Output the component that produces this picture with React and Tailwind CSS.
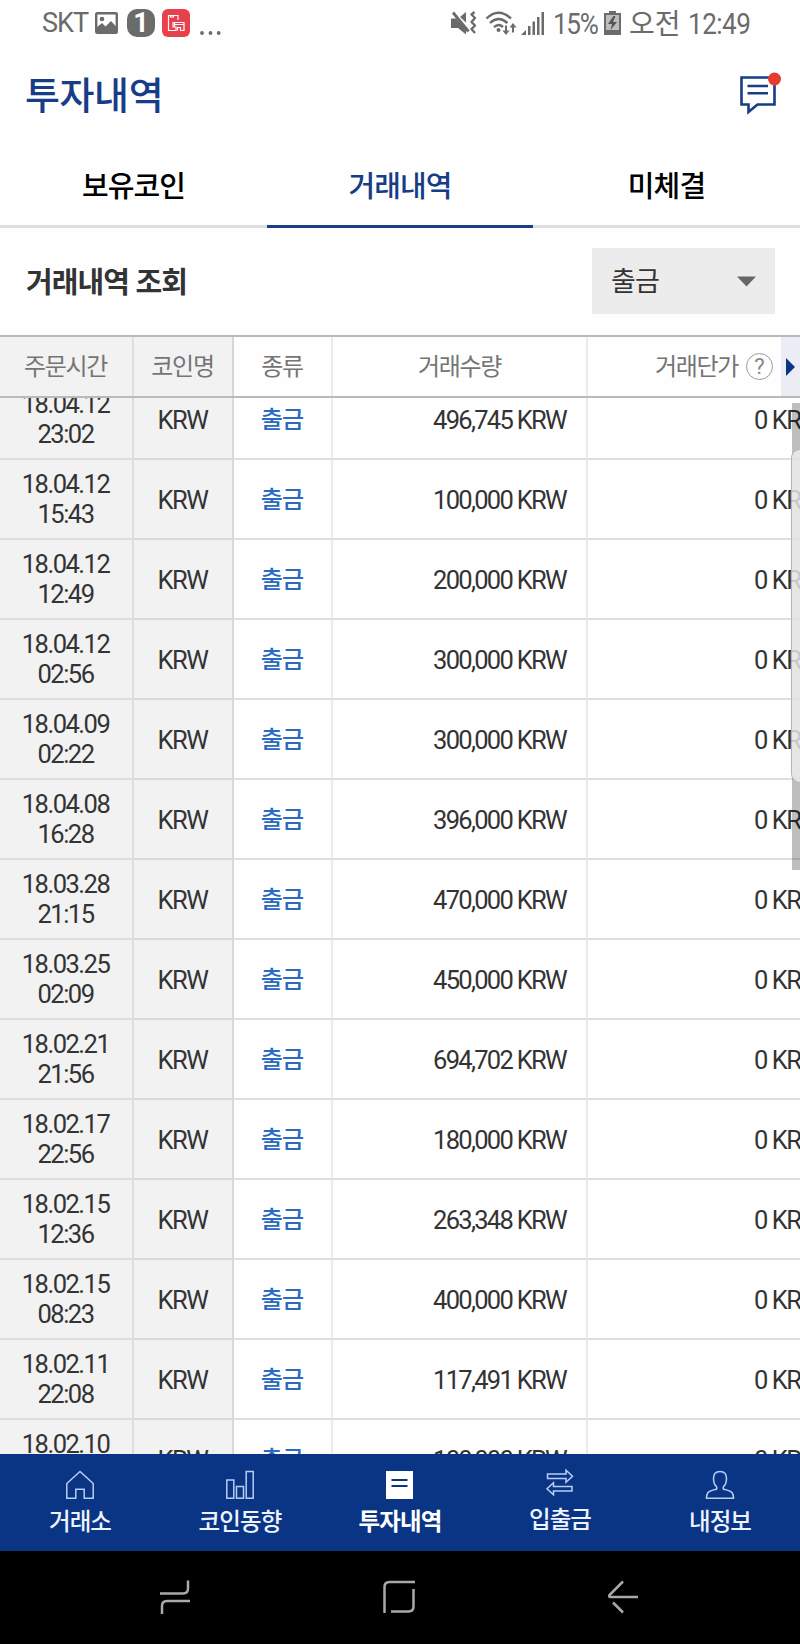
import React, { useState } from 'react';

const history = [
  { date: '18.04.12', time: '23:02', amount: '496,745' },
  { date: '18.04.12', time: '15:43', amount: '100,000' },
  { date: '18.04.12', time: '12:49', amount: '200,000' },
  { date: '18.04.12', time: '02:56', amount: '300,000' },
  { date: '18.04.09', time: '02:22', amount: '300,000' },
  { date: '18.04.08', time: '16:28', amount: '396,000' },
  { date: '18.03.28', time: '21:15', amount: '470,000' },
  { date: '18.03.25', time: '02:09', amount: '450,000' },
  { date: '18.02.21', time: '21:56', amount: '694,702' },
  { date: '18.02.17', time: '22:56', amount: '180,000' },
  { date: '18.02.15', time: '12:36', amount: '263,348' },
  { date: '18.02.15', time: '08:23', amount: '400,000' },
  { date: '18.02.11', time: '22:08', amount: '117,491' },
  { date: '18.02.10', time: '21:30', amount: '100,000' },
];

const StatusBar = () => (
  <div className="h-[46px] pl-[42px] pr-[51px] flex items-center justify-between text-[#6b6b6b] font-['Roboto','Noto_Sans_CJK_KR',sans-serif]">
    <div className="flex items-center">
      <span className="w-[47px] text-[27px] leading-none tracking-[-1px]">SKT</span>
      <svg className="ml-[6px]" width="23" height="22" viewBox="0 0 23 22">
        <rect x="1.2" y="1.2" width="20.6" height="19.6" rx="1" fill="none" stroke="#6b6b6b" strokeWidth="2.4" />
        <circle cx="7" cy="7" r="2.3" fill="#6b6b6b" />
        <path d="M1.5 15.5 7 11l3.5 3.5L16 9l5.500 6V21h-20z" fill="#6b6b6b" />
      </svg>
      <span className="ml-[9px] w-[28px] h-[28px] rounded-[10px] bg-[#6b6b6b] text-white text-[27px] leading-[28px] font-bold text-center">1</span>
      <svg className="ml-[7px]" width="28" height="28" viewBox="0 0 28 28">
        <rect width="28" height="28" rx="6" fill="#e6414c" />
        <g fill="none" stroke="#fff" strokeWidth="1.2">
          <path d="M16 11V6.500H6.500v15H14v-3.500h-3v-5M8.500 6.500v1.500h3v-1.500" />
          <path d="M12.500 17.500v-4h9.500v8h-3.500v-3h-3v3M12.500 15.500h9.500" />
        </g>
      </svg>
      <svg className="ml-[10px] mt-[19px]" width="21" height="6" viewBox="0 0 21 6" fill="#6b6b6b">
        <circle cx="2" cy="3" r="1.900" />
        <circle cx="10.500" cy="3" r="1.900" />
        <circle cx="18.700" cy="3" r="1.900" />
      </svg>
    </div>

    <div className="flex items-center">
      <svg width="26" height="24" viewBox="0 0 26 24">
        <path d="M0 7.500h5L15 18v5.500L7 17H0zM9 6l6-5v10.500z" fill="#6b6b6b" />
        <path d="M2 1.500l15.500 19" stroke="#6b6b6b" strokeWidth="2.800" />
        <path d="M23.500 1l-3 2.500 3.500 3.500-3.500 4 3.500 3.500-3.500 3.500 3.500 4" fill="none" stroke="#6b6b6b" strokeWidth="2.400" strokeLinejoin="round" />
      </svg>
      <svg className="ml-[8px]" width="32" height="25" viewBox="0 0 32 25" fill="none" stroke="#6b6b6b">
        <path d="M1.500 7.500Q13.500 -4 26 7.500" strokeWidth="2.400" />
        <path d="M5 12Q13.500 4 22.500 12" strokeWidth="2.400" />
        <path d="M9 16.200Q13.500 12 18 16" strokeWidth="2.400" />
        <circle cx="13.500" cy="19" r="2" fill="#6b6b6b" stroke="none" />
        <path d="M21 14.500v7M28 21.500v-7" strokeWidth="2" />
        <path d="M17.500 19.500h7l-3.500 4.500zM24.500 16.500h7l-3.500-4.500z" fill="#6b6b6b" stroke="none" />
      </svg>
      <svg className="ml-[4px]" width="24" height="23" viewBox="0 0 24 23" fill="#6b6b6b">
        <path d="M0 23l5-5v5z" />
        <rect x="7" y="14" width="2.500" height="9" />
        <rect x="11.500" y="9.500" width="2.500" height="13.500" />
        <rect x="16" y="5" width="2.500" height="18" />
        <rect x="20.500" y="0" width="2.500" height="23" />
      </svg>
      <span className="ml-[8px] w-[47px] text-[29px] leading-none tracking-[-1.500px] origin-left scale-x-90 whitespace-nowrap pt-[2px]">15%</span>
      <svg className="ml-[4px]" width="17" height="24" viewBox="0 0 17 24">
        <path d="M5 0h7v3h-7z" fill="#6b6b6b" />
        <rect x="1" y="3" width="15" height="20" fill="#bdbdbd" stroke="#6b6b6b" strokeWidth="2" />
        <path d="M1 19h15v4H1z" fill="#6b6b6b" />
        <path d="M9.500 5L4 13h4l-1.500 6 6.500-8H9l2.500-6z" fill="#555" />
      </svg>
      <span className="ml-[8px] w-[50px] text-[28px] leading-none whitespace-nowrap pt-[3px]">오전</span>
      <span className="ml-[9px] w-[61px] text-[29px] leading-none tracking-[-0.6px] origin-left scale-x-90 whitespace-nowrap pt-[2px]">12:49</span>
    </div>
  </div>
);

const HomeIcon = () => (
  <svg width="30" height="30" viewBox="0 0 30 30" fill="none" stroke="#b9cdf3" strokeWidth="1.5">
    <path d="M15 1.500L1.800 13.500v14.700h9v-9h8.400v9h9V13.500z" />
  </svg>
);

const ChartIcon = () => (
  <svg width="30" height="30" viewBox="0 0 30 30" fill="none" stroke="#b9cdf3" strokeWidth="1.5">
    <rect x="1.800" y="10" width="7" height="18.200" />
    <rect x="11.500" y="16.500" width="7" height="11.700" />
    <rect x="21.200" y="1.500" width="7" height="26.700" />
  </svg>
);

const ListIcon = () => (
  <svg width="30" height="30" viewBox="0 0 30 30">
    <rect x="1" y="1" width="27" height="28" fill="#fff" />
    <path d="M6.500 10h16M6.500 16h16" stroke="#0a3585" strokeWidth="2" />
  </svg>
);

const TransferIcon = () => (
  <svg width="30" height="30" viewBox="0 0 30 30" fill="none" stroke="#b9cdf3" strokeWidth="1.5">
    <path d="M2.500 6h18.500V2.200l6.500 6-6.500 6V10.500H2.500z" />
    <path d="M27 18.500H8.500v-3.700l-6.500 6 6.500 6v-3.700H27z" />
  </svg>
);

const UserIcon = () => (
  <svg width="30" height="30" viewBox="0 0 30 30" fill="none" stroke="#b9cdf3" strokeWidth="1.5">
    <path d="M15 1.500c-4 0-6.500 2.500-6.500 7 0 3.500 1 6.500 3.200 8.300v2.200c-3.500 1.200-7 1.500-8.700 3.500-1 1.300-1.500 3.500-1.500 5.700h27c0-2.200-.5-4.400-1.500-5.700-1.700-2-5.200-2.300-8.700-3.500v-2.200c2.200-1.800 3.200-4.800 3.200-8.300 0-4.500-2.500-7-6.500-7z" />
  </svg>
);

const menus = [
  { id: 'exchange', label: '거래소', icon: <HomeIcon /> },
  { id: 'trend', label: '코인동향', icon: <ChartIcon /> },
  { id: 'invest', label: '투자내역', icon: <ListIcon /> },
  { id: 'transfer', label: '입출금', icon: <TransferIcon />, raised: true },
  { id: 'my', label: '내정보', icon: <UserIcon /> },
];

const App = () => {
  const [tab, setTab] = useState('거래내역');
  const [menu, setMenu] = useState('invest');

  return (
    <div className="w-[800px] h-[1644px] overflow-hidden bg-[#fefefe] flex flex-col font-['Roboto','Noto_Sans_CJK_KR',sans-serif] text-[#333]">
      <StatusBar />

      <header className="h-[98px] pl-[25px] pr-[19px] flex items-center justify-between">
        <h1 className="pt-[2px] text-[38px] leading-none tracking-[-0.4px] font-medium text-[#173d86]">투자내역</h1>
        <svg className="mb-[4px]" width="42" height="44" viewBox="0 0 42 44">
          <path d="M2.500 6.500h33v27H18.500l-9 7.500v-7.500H2.500z" fill="none" stroke="#173d86" strokeWidth="2.600" />
          <path d="M8.500 15h20.500M8.500 22.300h20.500" stroke="#173d86" strokeWidth="2.600" />
          <circle cx="35.500" cy="8" r="6.500" fill="#e43d30" />
        </svg>
      </header>

      <nav className="h-[84px] grid grid-cols-[267px_266px_267px]">
        {['보유코인', '거래내역', '미체결'].map((name) => (
          <button
            key={name}
            onClick={() => setTab(name)}
            className={`border-b-[3px] pt-[6px] text-[29px] tracking-[-0.900px] font-medium ${
              tab === name ? 'border-[#1b3f80] text-[#173d86]' : 'border-[#dfdfdf] text-black'
            }`}
          >
            {name}
          </button>
        ))}
      </nav>

      <div className="h-[107px] pl-[26px] pr-[25px] pb-[1px] flex items-center justify-between">
        <h2 className="pt-[4px] text-[29px] leading-none font-bold tracking-[-0.900px]">거래내역 조회</h2>
        <button className="w-[183px] h-[66px] pl-[19px] pr-[19px] bg-[#ececec] flex items-center justify-between text-[27px] tracking-[-0.8px]">
          <span className="pt-[3px]">출금</span>
          <svg width="19" height="11" viewBox="0 0 19 11"><path d="M0 0.500h19l-9.500 10z" fill="#666" /></svg>
        </button>
      </div>

      {/* table head */}
      <div className="h-[63px] shrink-0 border-y-2 border-[#bababa] grid grid-cols-[134px_100px_99px_255px_1fr] text-[24px] tracking-[-1.300px] text-[#757575]">
        <div className="bg-[#f2f2f2] border-r-2 border-[#dedede] flex items-center justify-center pt-[1px] pr-[1px]">주문시간</div>
        <div className="bg-[#f2f2f2] border-r-2 border-[#d6d6d6] flex items-center justify-center pt-[1px] pr-[1px]">코인명</div>
        <div className="border-r-2 border-[#ebebeb] flex items-center justify-center pt-[1px] pr-[1px]">종류</div>
        <div className="border-r-2 border-[#ebebeb] flex items-center justify-center pt-[1px]">거래수량</div>
        <div className="flex items-center justify-end">
          <span className="whitespace-nowrap pt-[1px]">거래단가</span>
          <span className="ml-[8px] mr-[8px] w-[27px] h-[27px] shrink-0 rounded-full border-[1.5px] border-[#999] text-[#888] text-[22px] leading-[25px] tracking-normal text-center">?</span>
          <span className="w-[19px] h-full shrink-0 bg-[#ecedf4] flex items-center pl-[5px]">
            <svg width="9" height="18" viewBox="0 0 9 18"><path d="M0 0l9 9-9 9z" fill="#0a3585" /></svg>
          </span>
        </div>
      </div>

      <div className="relative flex-1 min-h-0 overflow-hidden">
        <div className="-mt-[18px]">
          {history.map((row, i) => (
            <div
              key={i}
              className="h-[80px] grid grid-cols-[134px_100px_99px_255px_1fr] text-[25.5px] tracking-[-1.500px] whitespace-nowrap"
            >
              <div className="bg-[#f2f2f2] border-r-2 border-b-2 border-[#dedede] flex flex-col items-center justify-center leading-[30px] pr-[1px]">
                <span>{row.date}</span>
                <span>{row.time}</span>
              </div>
              <div className="bg-[#f2f2f2] border-r-2 border-b-2 border-[#d9d9d9] flex items-center justify-center pt-[2px] pr-[1px]">KRW</div>
              <div className="border-r-2 border-b-2 border-r-[#ebebeb] border-b-[#dedede] flex items-center justify-center pt-[2px] pr-[1px] text-[24px] tracking-[-0.900px] font-medium text-[#2a6abf]">출금</div>
              <div className="border-r-2 border-b-2 border-r-[#ebebeb] border-b-[#dedede] flex items-center justify-end pr-[20px] pt-[2px] tracking-[-1.700px]">{row.amount} KRW</div>
              <div className="border-b-2 border-[#dedede] flex items-center pl-[166px] pt-[2px] overflow-hidden">0 KRW</div>
            </div>
          ))}
        </div>

        {/* edge panel handle over the list */}
        <div className="absolute top-[5px] right-0 w-[8px] h-[467px] bg-black/25" />
        <div className="absolute top-[51px] right-0 w-[9px] h-[334px] bg-[#f0f0f0]/80 border-l border-y border-[#b5b5b5] rounded-l-[9px]" />
      </div>

      <nav className="h-[97px] shrink-0 bg-[#0a3585] grid grid-cols-5 text-white text-[23.5px] tracking-[-0.900px]">
        {menus.map((m) => (
          <button
            key={m.id}
            onClick={() => setMenu(m.id)}
            className={`flex flex-col items-center leading-[30px] ${m.raised ? 'pt-[14px]' : 'pt-[16px]'} ${
              menu === m.id ? 'font-bold' : 'font-medium text-[#eef3ff]'
            }`}
          >
            {m.icon}
            <span className="mt-[7px]">{m.label}</span>
          </button>
        ))}
      </nav>

      <div className="h-[93px] shrink-0 bg-black flex items-start pt-[28px] pl-[159px]">
        <svg width="32" height="36" viewBox="0 0 32 36" fill="none" stroke="#a9a9a9" strokeWidth="2.500">
          <path d="M1 14.500h23q5 0 5-5V1.500M31 22H8q-5 0-5 5v8" />
        </svg>
        <svg className="ml-[191px]" width="34" height="36" viewBox="0 0 34 36" fill="none" stroke="#a9a9a9" strokeWidth="2.500">
          <path d="M2.500 34V8q0-5 5-5H33M31.500 10v17.500q0 5-5 5H9" />
        </svg>
        <svg className="ml-[191px]" width="32" height="36" viewBox="0 0 32 36" fill="none" stroke="#a9a9a9" strokeWidth="2.500">
          <path d="M16 2.500L2.500 16Q1.500 18 3 18H31M6 23.500l10 10" />
        </svg>
      </div>
    </div>
  );
};

export default App;
